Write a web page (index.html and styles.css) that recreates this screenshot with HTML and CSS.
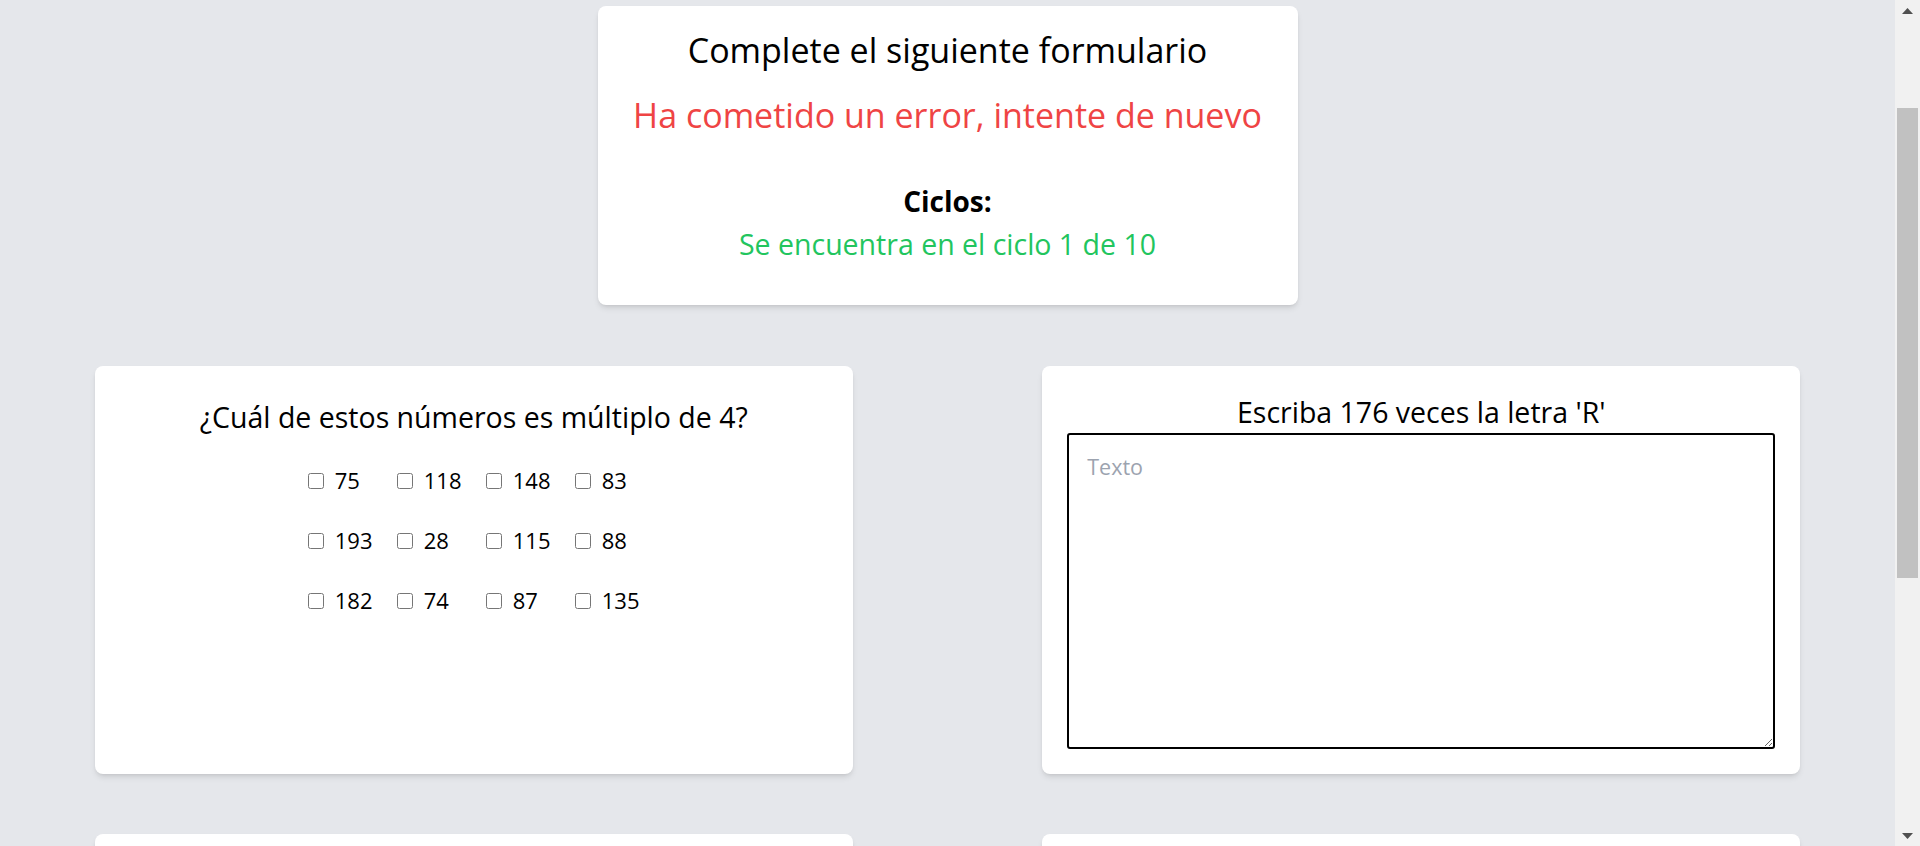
FILE: index.html
```html
<!DOCTYPE html>
<html lang="es">
<head>
<meta charset="utf-8">
<title>Formulario</title>
<link rel="stylesheet" href="styles.css">
</head>
<body>
<main class="page">
  <section class="header-card">
    <h1 class="title">Complete el siguiente formulario</h1>
    <p class="error">Ha cometido un error, intente de nuevo</p>
    <h2 class="cycles-label">Ciclos:</h2>
    <p class="cycles-info">Se encuentra en el ciclo 1 de 10</p>
  </section>

  <div class="questions">
    <div class="cell">
      <div class="card">
        <h3 class="question question-check">¿Cuál de estos números es múltiplo de 4?</h3>
        <div class="options">
          <label class="option"><input type="checkbox">75</label>
          <label class="option"><input type="checkbox">118</label>
          <label class="option"><input type="checkbox">148</label>
          <label class="option"><input type="checkbox">83</label>
          <label class="option"><input type="checkbox">193</label>
          <label class="option"><input type="checkbox">28</label>
          <label class="option"><input type="checkbox">115</label>
          <label class="option"><input type="checkbox">88</label>
          <label class="option"><input type="checkbox">182</label>
          <label class="option"><input type="checkbox">74</label>
          <label class="option"><input type="checkbox">87</label>
          <label class="option"><input type="checkbox">135</label>
        </div>
      </div>
    </div>
    <div class="cell">
      <div class="card">
        <h3 class="question question-text">Escriba 176 veces la letra 'R'</h3>
        <textarea class="answer" placeholder="Texto"></textarea>
      </div>
    </div>
    <div class="cell">
      <div class="card card-empty"></div>
    </div>
    <div class="cell">
      <div class="card card-empty"></div>
    </div>
  </div>
</main>
<aside class="scrollbar" aria-hidden="true">
  <div class="sb-btn">
    <svg width="11" height="6" viewBox="0 0 11 6"><path d="M0 6 L5.5 0 L11 6 Z" fill="#505050"/></svg>
  </div>
  <div class="sb-track">
    <div class="sb-thumb"></div>
  </div>
  <div class="sb-btn">
    <svg width="11" height="6" viewBox="0 0 11 6"><path d="M0 0 L5.5 6 L11 0 Z" fill="#505050"/></svg>
  </div>
</aside>
</body>
</html>
```

FILE: styles.css
```css
html, body {
  margin: 0;
  padding: 0;
}

body {
  background: #e5e7eb;
  font-family: "Open Sans", "Noto Sans", "DejaVu Sans", sans-serif;
  color: #000;
  display: flex;
  align-items: flex-start;
}

.page {
  flex: 1;
  min-width: 0;
  padding: 6px 0 120px;
}

.header-card {
  width: 700px;
  margin: 0 auto;
  box-sizing: border-box;
  background: #fff;
  border-radius: 8px;
  box-shadow: 0 4px 6px -1px rgba(0, 0, 0, 0.1), 0 2px 4px -2px rgba(0, 0, 0, 0.1);
  padding: 24px 20px 43px;
  text-align: center;
}

.title {
  margin: 0;
  font-size: 34px;
  line-height: 40px;
  font-weight: 400;
}

.error {
  margin: 25px 0 0;
  font-size: 34px;
  line-height: 40px;
  color: #ef4444;
}

.cycles-label {
  margin: 48px 0 0;
  font-size: 28px;
  line-height: 36px;
  font-weight: 700;
}

.cycles-info {
  margin: 7px 0 0;
  font-size: 28.5px;
  line-height: 36px;
  color: #22c55e;
}

.questions {
  margin-top: 61px;
  display: grid;
  grid-template-columns: 1fr 1fr;
  row-gap: 60px;
}

.cell {
  display: flex;
  justify-content: center;
}

.card {
  width: 80%;
  height: 408px;
  box-sizing: border-box;
  background: #fff;
  border-radius: 8px;
  box-shadow: 0 4px 6px -1px rgba(0, 0, 0, 0.1), 0 2px 4px -2px rgba(0, 0, 0, 0.1);
  padding: 0 25px 25px;
  display: flex;
  flex-direction: column;
  align-items: center;
}

.question {
  margin: 0;
  font-size: 28.5px;
  line-height: 36px;
  font-weight: 400;
  text-align: center;
}

.question-check {
  margin-top: 33px;
}

.question-text {
  margin-top: 28px;
}

.options {
  margin-top: 30px;
  display: grid;
  grid-template-columns: repeat(4, 65px);
  column-gap: 24px;
  row-gap: 30px;
}

.option {
  font-size: 22px;
  line-height: 30px;
  white-space: nowrap;
}

.option input {
  width: 16px;
  height: 16px;
  margin: 0 11px 2px 0;
  vertical-align: baseline;
}

.answer {
  margin-top: 3px;
  width: 100%;
  flex: 1;
  box-sizing: border-box;
  border: 2px solid #000;
  border-radius: 3px;
  padding: 17px 18px;
  font-family: inherit;
  font-size: 21.5px;
  line-height: 30px;
  color: #000;
  background: #fff;
}

.answer::placeholder {
  color: #9ca3af;
}

.scrollbar {
  flex: none;
  width: 25px;
  height: 846px;
  background: #f1f1f1;
  display: flex;
  flex-direction: column;
}

.sb-btn {
  height: 21px;
  display: flex;
  align-items: center;
  justify-content: center;
}

.sb-track {
  flex: 1;
  padding: 0 2px;
}

.sb-thumb {
  margin-top: 87px;
  height: 470px;
  background: #c1c1c1;
}
```
